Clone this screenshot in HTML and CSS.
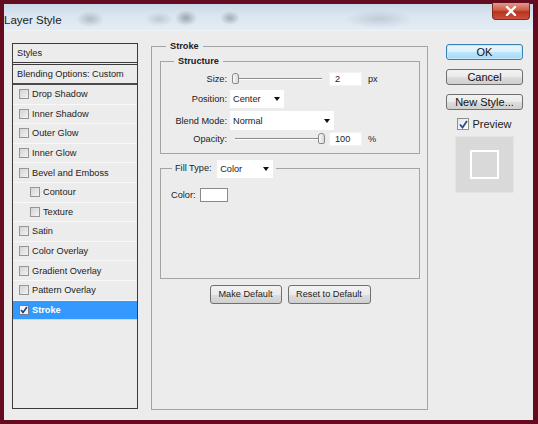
FILE: index.html
```html
<!DOCTYPE html>
<html lang="en">
<head>
    <meta charset="UTF-8">
    <title>Layer Style</title>
    <link rel="stylesheet" href="styles.css">
</head>
<body>
    <div class="window">
        <div class="titlebar">
            <span class="title">Layer Style</span>
            <span class="close">
                <svg width="12" height="10" viewBox="0 0 12 10"><path d="M2 1 L10 9 M10 1 L2 9" stroke="#fff" stroke-width="2.4" stroke-linecap="round"/></svg>
            </span>
        </div>

        <div class="dialog">
            <ul class="styles-list">
                <li class="head">Styles</li>
                <li class="blend">Blending Options: Custom</li>
                <li class="item"><span class="check"></span>Drop Shadow</li>
                <li class="item"><span class="check"></span>Inner Shadow</li>
                <li class="item"><span class="check"></span>Outer Glow</li>
                <li class="item"><span class="check"></span>Inner Glow</li>
                <li class="item"><span class="check"></span>Bevel and Emboss</li>
                <li class="item sub"><span class="check"></span>Contour</li>
                <li class="item sub"><span class="check"></span>Texture</li>
                <li class="item"><span class="check"></span>Satin</li>
                <li class="item"><span class="check"></span>Color Overlay</li>
                <li class="item"><span class="check"></span>Gradient Overlay</li>
                <li class="item"><span class="check"></span>Pattern Overlay</li>
                <li class="item selected"><span class="check on">
                    <svg width="8" height="8" viewBox="0 0 8 8"><path d="M1 4 L3 6.5 L7 1" fill="none" stroke="#1d3b7a" stroke-width="1.6"/></svg>
                </span>Stroke</li>
            </ul>

            <fieldset class="panel">
                <legend>Stroke</legend>

                <fieldset class="group structure">
                    <legend>Structure</legend>

                    <div class="row size-row">
                        <span class="label">Size:</span>
                        <div class="slider"><span class="track"></span><span class="thumb"></span></div>
                        <span class="field">2</span>
                        <span class="unit">px</span>
                    </div>

                    <div class="row pos-row">
                        <span class="label">Position:</span>
                        <div class="select select-pos">Center<span class="arrow"></span></div>
                    </div>

                    <div class="row blend-row">
                        <span class="label">Blend Mode:</span>
                        <div class="select select-blend">Normal<span class="arrow"></span></div>
                    </div>

                    <div class="row opacity-row">
                        <span class="label">Opacity:</span>
                        <div class="slider slider-full"><span class="track"></span><span class="thumb"></span></div>
                        <span class="field">100</span>
                        <span class="unit">%</span>
                    </div>
                </fieldset>

                <fieldset class="group fill">
                    <legend>Fill Type: <span class="select select-fill">Color<span class="arrow"></span></span></legend>
                    <div class="fill-body">
                        <span>Color:</span>
                        <span class="swatch"></span>
                    </div>
                </fieldset>

                <div class="defaults">
                    <button class="btn btn-make">Make Default</button>
                    <button class="btn btn-reset">Reset to Default</button>
                </div>
            </fieldset>

            <div class="actions">
                <button class="big-btn ok">OK</button>
                <button class="big-btn">Cancel</button>
                <button class="big-btn">New Style...</button>
                <div class="preview-toggle">
                    <span class="pcheck">
                        <svg width="9" height="9" viewBox="0 0 9 9"><path d="M1 4.5 L3.5 7.5 L8 1" fill="none" stroke="#2a4a8c" stroke-width="1.8"/></svg>
                    </span>
                    Preview
                </div>
                <div class="preview-box"><span class="preview-square"></span></div>
            </div>
        </div>
    </div>
</body>
</html>
```

FILE: styles.css
```css
body {
    margin: 0;
    background-color: #650b1f;
    font-family: 'Liberation Sans', Arial, sans-serif;
    color: #222;
}
.window {
    width: 538px;
    height: 424px;
    box-sizing: border-box;
    padding: 4px 5px 4px 4px;
    display: flex;
    flex-direction: column;
}
.titlebar {
    height: 26px;
    flex: none;
    display: flex;
    align-items: flex-start;
    background:
        radial-gradient(ellipse 14px 8px at 86px 15px, rgba(110, 120, 130, 0.4), transparent),
        radial-gradient(ellipse 14px 7px at 155px 15px, rgba(120, 130, 140, 0.3), transparent),
        radial-gradient(ellipse 11px 8px at 182px 14px, rgba(90, 100, 110, 0.5), transparent),
        radial-gradient(ellipse 10px 7px at 226px 14px, rgba(90, 100, 110, 0.45), transparent),
        radial-gradient(ellipse 34px 9px at 375px 15px, rgba(120, 140, 160, 0.3), transparent),
        linear-gradient(to bottom, #c9d8e6, #dbe6f0 45%, #e4ecf4);
    border-bottom: 1px solid #f0f3f6;
}
.title {
    font-size: 11.5px;
    line-height: 13px;
    margin-top: 10px;
    color: #1b1b1b;
}
.close {
    margin: -1px 3px 0 auto;
    width: 38px;
    height: 17px;
    display: flex;
    align-items: center;
    justify-content: center;
    border: 1px solid #7d2b22;
    border-top: none;
    border-radius: 0 0 4px 4px;
    background: linear-gradient(to bottom, #e09a8c, #cf5a45 45%, #b7321f 55%, #c9533c);
    box-sizing: border-box;
}

.dialog {
    flex: 1;
    background-color: #ececec;
    display: flex;
    align-items: flex-start;
    padding: 12px 0 0 8px;
}

/* styles list */
.styles-list {
    width: 126px;
    height: 366px;
    box-sizing: border-box;
    margin: 0;
    padding: 0;
    list-style: none;
    border: 1px solid #3b3b3b;
    font-size: 9.2px;
    flex: none;
}
.styles-list li {
    display: flex;
    align-items: center;
    white-space: nowrap;
}
.head {
    height: 18px;
    padding-left: 4px;
    border-bottom: 3px double #3b3b3b;
}
.blend {
    height: 18px;
    padding-left: 4px;
    border-bottom: 2px solid #4a4a4a;
}
.item {
    height: 18.6px;
    padding-left: 6px;
    border-bottom: 1px solid #f8f8f8;
}
.item.sub {
    padding-left: 17px;
}
.check {
    width: 10px;
    height: 10px;
    box-sizing: border-box;
    margin-right: 3px;
    border: 1px solid #959595;
    background: linear-gradient(135deg, #d4d4d4, #f2f2f2);
    display: flex;
    align-items: center;
    justify-content: center;
}
.item.selected {
    background-color: #3399ff;
    color: #fff;
    font-weight: bold;
    border-bottom-color: #b9dcff;
}
.check.on {
    background: #f4f4f4;
    border-color: #6f7f95;
}

/* stroke panel */
.panel {
    width: 277px;
    height: 370px;
    box-sizing: border-box;
    margin: -3px 0 0 13px;
    padding: 0 7px 0 8px;
    border: 1px solid #a4a4a4;
    font-size: 9.2px;
    flex: none;
}
.panel legend {
    font-weight: bold;
    line-height: 12px;
    padding: 0 4px;
    margin-left: 6px;
}
.group {
    margin: 0;
    border: 1px solid #a4a4a4;
}
.structure {
    margin-top: 3px;
    padding: 0 0 7px 0;
}
.structure legend {
    margin-left: 13px;
}
.row {
    display: flex;
    align-items: center;
}
.label {
    width: 66px;
    text-align: right;
    flex: none;
}
.size-row {
    height: 14px;
    margin-top: 5px;
}
.pos-row {
    margin-top: 4px;
}
.blend-row {
    margin-top: 3px;
}
.opacity-row {
    height: 14px;
    margin-top: 2px;
}
.slider {
    position: relative;
    width: 90px;
    height: 14px;
    margin-left: 5px;
}
.slider-full {
    width: 89px;
    margin-left: 6px;
}
.track {
    position: absolute;
    left: 2px;
    right: 0;
    top: 6px;
    height: 1px;
    background: #8c8c8c;
    border-bottom: 1px solid #fff;
}
.thumb {
    position: absolute;
    left: 0;
    top: 1px;
    width: 7px;
    height: 11px;
    box-sizing: border-box;
    border: 1px solid #8a8a8a;
    border-radius: 3px 3px 2px 2px;
    background: linear-gradient(to right, #fafafa, #d9d9d9);
}
.slider-full .thumb {
    left: 85px;
}
.field {
    width: 33px;
    height: 14px;
    box-sizing: border-box;
    margin-left: 7px;
    padding-left: 5px;
    background: #fff;
    border: 1px solid #f2f2f2;
    line-height: 12px;
}
.unit {
    margin-left: 6px;
}
.select {
    position: relative;
    display: inline-flex;
    align-items: center;
    box-sizing: border-box;
    background: #fff;
    padding-left: 3px;
    font-weight: normal;
    vertical-align: middle;
}
.select-pos {
    width: 54px;
    height: 18px;
    margin-left: 3px;
}
.select-blend {
    width: 104px;
    height: 19px;
    margin-left: 3px;
}
.select-fill {
    width: 56px;
    height: 18px;
    margin-left: 3px;
}
.arrow {
    margin-left: auto;
    margin-right: 4px;
    width: 0;
    height: 0;
    border-left: 3.5px solid transparent;
    border-right: 3.5px solid transparent;
    border-top: 4px solid #111;
}
.fill {
    margin-top: 5px;
    padding: 0;
}
.fill legend {
    font-weight: normal;
    line-height: 18px;
    margin-left: 11px;
    padding: 0 3px;
}
.fill-body {
    height: 100px;
    box-sizing: border-box;
    padding: 10px 0 0 10px;
    display: flex;
    align-items: flex-start;
    line-height: 14px;
}
.swatch {
    width: 28px;
    height: 14px;
    box-sizing: border-box;
    margin-left: 4px;
    background: #fff;
    border: 1px solid #8a8a8a;
}
.defaults {
    display: flex;
    justify-content: center;
    gap: 6px;
    margin-top: 6px;
}
.btn {
    height: 19px;
    padding: 0;
    font-family: 'Liberation Sans', Arial, sans-serif;
    font-size: 9.2px;
    color: #222;
    border: 1px solid #707070;
    border-radius: 3px;
    background: linear-gradient(to bottom, #f2f2f2, #ebebeb 50%, #dddddd 51%, #cfcfcf);
}
.btn-make {
    width: 72px;
}
.btn-reset {
    width: 83px;
}

/* right column */
.actions {
    width: 77px;
    margin: 1px 0 0 18px;
    display: flex;
    flex-direction: column;
    flex: none;
}
.big-btn {
    height: 16px;
    margin-bottom: 9px;
    padding: 0;
    font-family: 'Liberation Sans', Arial, sans-serif;
    font-size: 11px;
    line-height: 14px;
    color: #111;
    border: 1px solid #707070;
    border-radius: 3px;
    background: linear-gradient(to bottom, #f2f2f2, #ebebeb 50%, #dddddd 51%, #cfcfcf);
}
.big-btn.ok {
    border-color: #3c7fb1;
    background: linear-gradient(to bottom, #eaf6fd, #d9f0fc 50%, #bee6fd 51%, #a7d9f5);
    box-shadow: inset 0 0 0 1px #c4e8fb;
}
.preview-toggle {
    display: flex;
    align-items: center;
    justify-content: center;
    gap: 3px;
    margin-top: -1px;
    font-size: 11px;
    height: 12px;
}
.pcheck {
    width: 12px;
    height: 12px;
    box-sizing: border-box;
    border: 1px solid #8e8f8f;
    background: linear-gradient(135deg, #e6e6e6, #ffffff);
    display: flex;
    align-items: center;
    justify-content: center;
}
.preview-box {
    width: 59px;
    height: 57px;
    box-sizing: border-box;
    margin: 6px auto 0;
    background: #d9d9d9;
    border: 1px solid #e4e4e4;
    display: flex;
    align-items: center;
    justify-content: center;
}
.preview-square {
    width: 29px;
    height: 29px;
    box-sizing: border-box;
    border: 2px solid #fff;
}
```
